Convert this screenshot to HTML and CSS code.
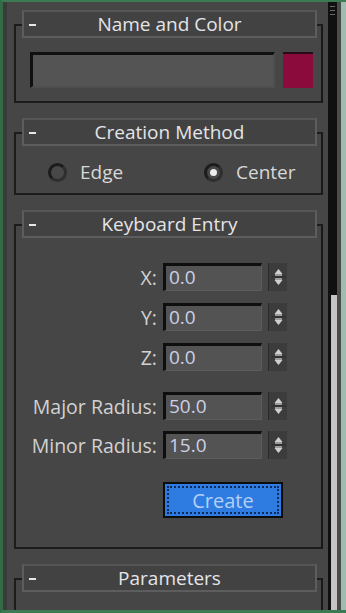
FILE: index.html
```html
<!DOCTYPE html>
<html lang="en">

<head>
    <meta charset="UTF-8">
    <meta name="viewport" content="width=device-width, initial-scale=1.0">
    <title>Create Panel</title>
    <link rel="stylesheet" href="styles.css">
</head>

<body>
    <div class="window">
        <div class="gutter"></div>
        <!-- rollout list -->
        <div class="panel">
            <div class="rollout">
                <div class="rollout-head"><span class="minus"></span><span class="title">Name and Color</span></div>
                <div class="rollout-body name-body">
                    <div class="name-field"></div>
                    <div class="swatch"></div>
                </div>
            </div>

            <div class="rollout">
                <div class="rollout-head"><span class="minus"></span><span class="title">Creation Method</span></div>
                <div class="rollout-body method-body">
                    <label class="radio"><i></i>Edge</label>
                    <label class="radio checked"><i></i>Center</label>
                </div>
            </div>

            <div class="rollout">
                <div class="rollout-head"><span class="minus"></span><span class="title">Keyboard Entry</span></div>
                <div class="rollout-body kb-body">
                    <div class="row"><span class="lbl">X:</span><span class="field">0.0</span><span class="spin"></span></div>
                    <div class="row"><span class="lbl">Y:</span><span class="field">0.0</span><span class="spin"></span></div>
                    <div class="row"><span class="lbl">Z:</span><span class="field">0.0</span><span class="spin"></span></div>
                    <div class="row gap"><span class="lbl">Major Radius:</span><span class="field">50.0</span><span class="spin"></span></div>
                    <div class="row"><span class="lbl">Minor Radius:</span><span class="field">15.0</span><span class="spin"></span></div>
                    <div class="btn-row"><button class="create">Create</button></div>
                </div>
            </div>

            <div class="rollout">
                <div class="rollout-head"><span class="minus"></span><span class="title">Parameters</span></div>
                <div class="rollout-body last-body"></div>
            </div>
        </div>
        <!-- scrollbar -->
        <div class="scroll">
            <div class="grip"></div>
            <div class="thumb"></div>
        </div>
        <div class="side"></div>
    </div>

    <svg width="0" height="0" class="defs">
        <defs>
            <symbol id="arrows" viewBox="0 0 19 28">
                <path d="M9.5 6 L13.5 11 L5.5 11 Z" fill="#d0d0d0" />
                <rect x="6" y="11" width="7" height="2" fill="#9a9a9a" />
                <rect x="2" y="13.5" width="15" height="1" fill="#2a2a2a" />
                <rect x="6" y="15" width="7" height="2" fill="#9a9a9a" />
                <path d="M5.5 17 L13.5 17 L9.5 22 Z" fill="#d0d0d0" />
            </symbol>
        </defs>
    </svg>
    <script>
        // 给每个微调按钮放上箭头
        document.querySelectorAll(".spin").forEach(function(item) {
            item.innerHTML = '<svg width="19" height="28"><use href="#arrows"></use></svg>';
        })
    </script>
</body>

</html>
```

FILE: styles.css
```css
* {
    margin: 0;
    padding: 0;
    box-sizing: border-box;
}

body {
    background: #464646;
    font-family: "Open Sans", "Noto Sans", sans-serif;
    color: #d6d6d6;
}

.defs {
    position: absolute;
}

.window {
    width: 346px;
    height: 613px;
    display: flex;
    overflow: hidden;
    background: #464646;
    border-top: 2px solid #3b7a52;
    border-bottom: 3px solid #3b7a52;
    border-left: 3px solid #336b47;
}

.gutter {
    width: 4px;
    background: #3a3a3a;
}

.panel {
    flex: 1;
    padding-top: 8px;
    overflow: hidden;
}

/* rollout */
.rollout {
    width: 309px;
    margin-left: 7px;
    margin-bottom: 15px;
}

.rollout-head {
    position: relative;
    z-index: 1;
    height: 28px;
    margin: 0 6px 0 8px;
    background: #424242;
    border: 2px solid #5d5d5d;
    border-top-color: #565656;
    display: grid;
    grid-template-columns: 1fr auto 1fr;
    align-items: center;
}

.minus {
    width: 7px;
    height: 2px;
    margin-left: 5px;
    margin-top: 2px;
    background: #e6e6e6;
}

.title {
    font-size: 19px;
    line-height: 24px;
    color: #e4e4e8;
}

.rollout-body {
    margin-top: -14px;
    border: 2px solid #1c1c1c;
    border-right-color: #181818;
}

/* Name and Color */
.name-body {
    display: flex;
    padding: 26px 8px 13px 14px;
}

.name-field {
    width: 245px;
    height: 36px;
    background: #545454;
    border-top: 3px solid #101010;
    border-left: 3px solid #101010;
    border-right: 2px solid #4e4e4e;
    border-bottom: 2px solid #4e4e4e;
}

.swatch {
    width: 30px;
    height: 36px;
    margin-left: 8px;
    background: #8a0b3c;
    border-top: 2px solid #2a0a16;
}

/* Creation Method */
.method-body {
    display: grid;
    grid-template-columns: 156px auto;
    align-items: center;
    padding: 25px 0 12px 32px;
    height: 63px;
}

.radio {
    display: flex;
    align-items: center;
    font-size: 19px;
    color: #d8d8d8;
}

.radio i {
    width: 19px;
    height: 19px;
    margin-right: 13px;
    border-radius: 50%;
    background: #484848;
    border: 3px solid #1c1c1c;
    border-bottom-color: #2e2e2e;
    border-right-color: #2e2e2e;
    display: flex;
    align-items: center;
    justify-content: center;
}

.checked i::after {
    content: "";
    width: 7px;
    height: 7px;
    border-radius: 50%;
    background: #ececec;
}

/* Keyboard Entry */
.kb-body {
    padding: 37px 0 29px 0;
}

.row {
    display: grid;
    grid-template-columns: 141px 99px 19px;
    column-gap: 6px;
    align-items: center;
    height: 28px;
    margin-bottom: 12px;
}

.row.gap {
    margin-top: 21px;
    margin-bottom: 11px;
}

.lbl {
    text-align: right;
    font-size: 19.5px;
    color: #d2d2d2;
    white-space: nowrap;
}

.field {
    height: 28px;
    background: #535353;
    border-top: 3px solid #0e0e0e;
    border-left: 3px solid #0e0e0e;
    border-right: 1px solid #5c5c5c;
    border-bottom: 1px solid #5c5c5c;
    padding-left: 3px;
    font-size: 19px;
    line-height: 23px;
    color: #cdd0e6;
}

.spin {
    height: 28px;
    background: #3c3c3c;
    border-left: 1px solid #2a2a2a;
}

.btn-row {
    padding-left: 147px;
    margin-top: 23px;
}

.create {
    width: 120px;
    height: 36px;
    background: #2e7be2;
    border: 2px solid #0d0d0d;
    outline: 2px dotted #0d2a5c;
    outline-offset: -6px;
    font-family: "Open Sans", "Noto Sans", sans-serif;
    font-size: 20px;
    color: #b4d0f6;
}

.last-body {
    height: 60px;
    border-bottom: none;
}

/* scrollbar */
.scroll {
    width: 9px;
    display: flex;
    flex-direction: column;
    background: #101010;
}

.grip {
    height: 293px;
    background: repeating-linear-gradient(#101010 0 3px, #6a6a6a 3px 4px) 2px 1px / 5px 12px no-repeat;
}

.thumb {
    flex: 1;
    margin-left: 3px;
    background: #c4c4c4;
}

.side {
    width: 9px;
    background: #4b4b4b;
    border-right: 5px solid #9fbcb0;
}
```
